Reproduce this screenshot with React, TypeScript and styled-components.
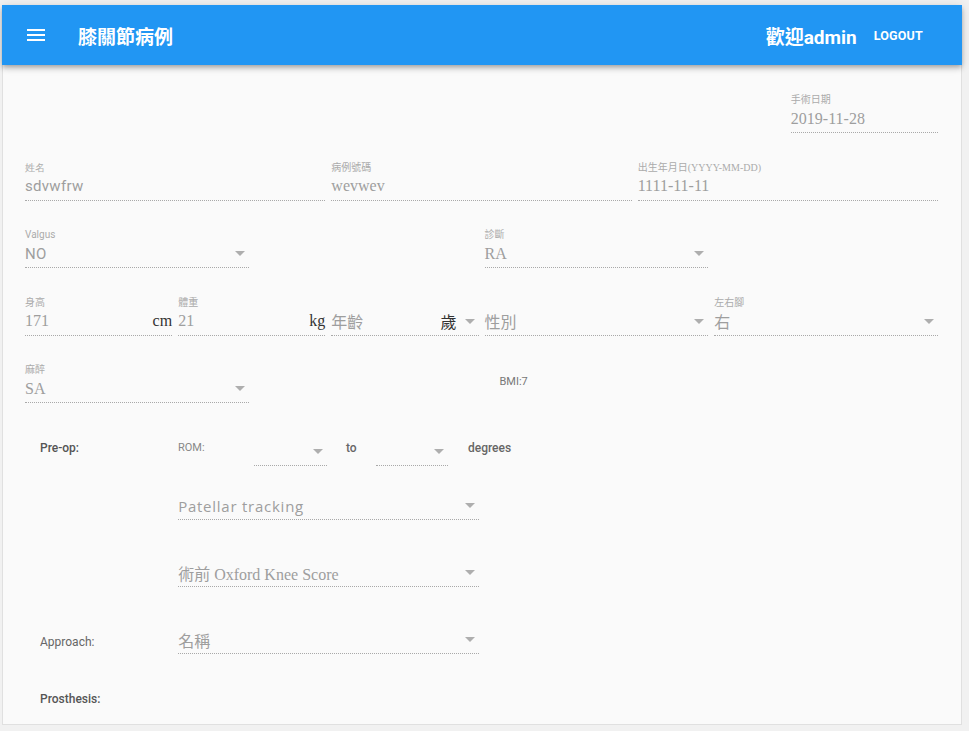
import React from "react";
import styled, { createGlobalStyle } from "styled-components";

const GlobalStyle = createGlobalStyle`
  body {
    margin: 0;
    background: #f1f1f1;
    font-family: Roboto, "Noto Sans CJK TC", sans-serif;
  }
`;

type Face = "serif" | "sans" | "wide";

type FieldProps = {
  col: string;
  label?: string;
  value?: string;
  face?: Face;
  suffix?: string;
  select?: boolean;
};

function DropArrow() {
  return (
    <ArrowSvg viewBox="7 10 10 5" width="10" height="5">
      <path d="M7 10l5 5 5-5z" />
    </ArrowSvg>
  );
}

function Field({ col, label, value, face = "serif", suffix, select }: FieldProps) {
  return (
    <FieldBox $col={col}>
      {label !== undefined && <Label $face={face}>{label}</Label>}
      <InputLine>
        <Value $face={face}>{value}</Value>
        {suffix && <Suffix>{suffix}</Suffix>}
        {select && <DropArrow />}
      </InputLine>
    </FieldBox>
  );
}

function MiniSelect({ width }: { width: number }) {
  return (
    <MiniBox style={{ width }}>
      <InputLine>
        <Value />
        <DropArrow />
      </InputLine>
    </MiniBox>
  );
}

function App() {
  return (
    <>
      <GlobalStyle />
      <Shell>
        <Bar>
          <MenuButton>
            <svg viewBox="0 0 24 24" width="24" height="24" fill="#fff">
              <path d="M3 18h18v-2H3v2zm0-5h18v-2H3v2zm0-7v2h18V6H3z" />
            </svg>
          </MenuButton>
          <Title>膝關節病例</Title>
          <Welcome>歡迎admin</Welcome>
          <LogoutButton>LOGOUT</LogoutButton>
        </Bar>
        <Card>
          {/* 基本資料 */}
          <Rows>
            <FormRow>
              <Field col="11 / span 2" label="手術日期" value="2019-11-28" />
            </FormRow>
            <FormRow>
              <Field col="1 / span 4" label="姓名" value="sdvwfrw" face="sans" />
              <Field col="5 / span 4" label="病例號碼" value="wevwev" />
              <Field col="9 / span 4" label="出生年月日(YYYY-MM-DD)" value="1111-11-11" />
            </FormRow>
            <FormRow>
              <Field col="1 / span 3" label="Valgus" value="NO" face="sans" select />
              <Field col="7 / span 3" label="診斷" value="RA" select />
            </FormRow>
            <FormRow>
              <Field col="1 / span 2" label="身高" value="171" suffix="cm" />
              <Field col="3 / span 2" label="體重" value="21" suffix="kg" />
              <Field col="5 / span 2" label="" value="年齡" suffix="歲" select />
              <Field col="7 / span 3" label="" value="性別" select />
              <Field col="10 / span 3" label="左右腳" value="右" select />
            </FormRow>
            <FormRow>
              <Field col="1 / span 3" label="麻醉" value="SA" select />
              <Bmi>BMI:7</Bmi>
            </FormRow>
          </Rows>

          {/* 術前 */}
          <PreOpRow>
            <SectionLabel>Pre-op:</SectionLabel>
            <RomLabel>ROM:</RomLabel>
            <MiniSelect width={73} />
            <Joiner>to</Joiner>
            <MiniSelect width={72} />
            <Joiner $last>degrees</Joiner>
          </PreOpRow>
          <FormRow $top={28}>
            <Field col="3 / span 4" value="Patellar tracking" face="wide" select />
          </FormRow>
          <FormRow $top={41}>
            <Field col="3 / span 4" value="術前 Oxford Knee Score" select />
          </FormRow>
          <FormRow $top={41}>
            <SideLabel>Approach:</SideLabel>
            <Field col="3 / span 4" value="名稱" select />
          </FormRow>
          <SectionLabel $top={37}>Prosthesis:</SectionLabel>
        </Card>
      </Shell>
    </>
  );
}

const serifStack = '"Liberation Serif", "Noto Sans CJK TC", serif';

const Shell = styled.div`
  width: 960px;
  margin: 5px 0 0 2px;
`;

const Bar = styled.header`
  position: relative;
  z-index: 1;
  height: 60px;
  display: flex;
  align-items: center;
  padding: 0 31px 0 22px;
  background: #2196f3;
  color: #fff;
  box-shadow: 0 2px 4px -1px rgba(0, 0, 0, 0.2), 0 4px 5px 0 rgba(0, 0, 0, 0.14),
    0 1px 10px 0 rgba(0, 0, 0, 0.12);
`;

const MenuButton = styled.div`
  width: 24px;
  height: 24px;
  display: flex;
`;

const Title = styled.h1`
  margin: 0 0 0 30px;
  flex: 1;
  font-family: "Noto Sans CJK TC", sans-serif;
  font-size: 19px;
  font-weight: 700;
`;

const Welcome = styled.div`
  font-family: Roboto, "Noto Sans CJK TC", sans-serif;
  font-size: 19px;
  font-weight: 700;
  margin-right: 9px;
`;

const LogoutButton = styled.button`
  border: 0;
  background: none;
  color: #fff;
  padding: 6px 8px;
  font-family: Roboto, sans-serif;
  font-size: 12.5px;
  font-weight: 700;
  letter-spacing: 0.2px;
`;

const Card = styled.main`
  background: #fafafa;
  border: 1px solid #e0e0e0;
  border-top: 0;
  height: 660px;
  padding: 28px 18px 0 22px;
  box-sizing: border-box;
`;

const Rows = styled.div`
  display: flex;
  flex-direction: column;
  gap: 27.5px;
`;

const FormRow = styled.div<{ $top?: number }>`
  display: grid;
  grid-template-columns: repeat(12, 1fr);
  column-gap: 6px;
  width: 913px;
  margin-top: ${(p) => p.$top ?? 0}px;
`;

const FieldBox = styled.div<{ $col: string }>`
  grid-column: ${(p) => p.$col};
  display: flex;
  flex-direction: column;
  min-width: 0;
`;

const Label = styled.label<{ $face: Face }>`
  height: 14px;
  line-height: 14px;
  font-size: 10px;
  color: #ababab;
  font-family: ${(p) => (p.$face === "serif" ? serifStack : "Roboto, sans-serif")};
  white-space: nowrap;
`;

const InputLine = styled.div`
  height: 26px;
  padding-bottom: 2px;
  box-sizing: border-box;
  display: flex;
  align-items: center;
  gap: 4px;
  border-bottom: 1px dotted rgba(0, 0, 0, 0.32);
`;

const Value = styled.span<{ $face?: Face }>`
  flex: 1;
  white-space: nowrap;
  color: #9e9e9e;
  font-size: ${(p) => (p.$face === "sans" ? "15px" : p.$face === "wide" ? "15px" : "16px")};
  letter-spacing: ${(p) => (p.$face === "sans" ? "0.3px" : p.$face === "wide" ? "0.75px" : "0")};
  font-family: ${(p) =>
    p.$face === "sans"
      ? "Roboto, sans-serif"
      : p.$face === "wide"
      ? '"Open Sans", sans-serif'
      : serifStack};
`;

const Suffix = styled.span`
  font-family: ${serifStack};
  font-size: 16px;
  color: #333;
`;

const ArrowSvg = styled.svg`
  fill: rgba(0, 0, 0, 0.3);
  margin: 0 4px;
  flex: none;
`;

const Bmi = styled.div`
  grid-column: 7 / span 2;
  padding: 12px 0 0 15px;
  font-size: 11px;
  line-height: 14px;
  color: #777;
`;

const PreOpRow = styled.div`
  display: flex;
  align-items: flex-start;
  margin-top: 37px;
`;

const SectionLabel = styled.div<{ $top?: number }>`
  width: 138px;
  padding-left: 15px;
  margin-top: ${(p) => p.$top ?? 0}px;
  font-size: 12px;
  line-height: 16px;
  font-weight: 500;
  color: #555;
`;

const RomLabel = styled.div`
  width: 76px;
  font-size: 11px;
  line-height: 16px;
  color: #888;
`;

const MiniBox = styled.div`
  flex: none;
`;

const Joiner = styled.div<{ $last?: boolean }>`
  width: ${(p) => (p.$last ? "auto" : "30px")};
  margin-left: ${(p) => (p.$last ? 20 : 19)}px;
  font-size: 12px;
  line-height: 16px;
  font-weight: 500;
  color: #666;
`;

const SideLabel = styled.div`
  grid-column: 1 / span 2;
  padding: 6px 0 0 15px;
  font-size: 12px;
  line-height: 16px;
  color: #666;
`;

export default App;
